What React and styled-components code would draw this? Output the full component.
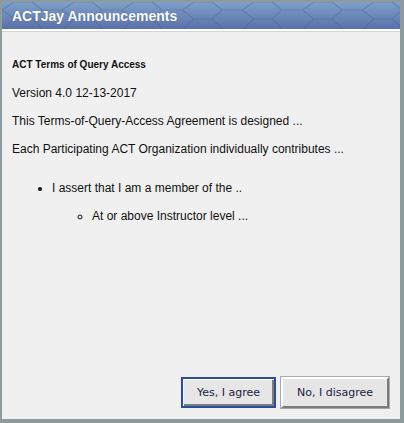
import React from 'react';
import styled, { createGlobalStyle } from 'styled-components';

const hexPattern = encodeURIComponent(
  `<svg xmlns='http://www.w3.org/2000/svg' width='60' height='34'><path d='M0 8 L12 0 L30 0 L40 8 L30 17 L12 17 Z M40 8 L60 8 M30 17 L40 26 L30 34 M12 17 L2 26 L12 34' fill='none' stroke='#415b92' stroke-opacity='0.35' stroke-width='1.2'/></svg>`
);

const GlobalStyle = createGlobalStyle`
  html, body {
    margin: 0;
    padding: 0;
    background: #8d9b9c;
  }
  body {
    font-family: "Liberation Sans", Arial, sans-serif;
  }
`;

const Frame = styled.div`
  width: 404px;
  height: 423px;
  box-sizing: border-box;
  border-style: solid;
  border-color: #8d9b9c;
  border-width: 2px 4px 4px 2px;
  display: flex;
  flex-direction: column;
  background: #f0f0f0;
`;

const Header = styled.div`
  height: 27px;
  flex-shrink: 0;
  display: flex;
  align-items: center;
  padding-left: 10px;
  background-color: #6b88bb;
  background-image: url("data:image/svg+xml,${hexPattern}"),
    linear-gradient(#7fa0c9, #5a71a9);
  border-bottom: 2px solid #ffffff;
  box-shadow: 0 1px 0 #d4d4d4;
`;

const Title = styled.h1`
  margin: 0;
  font-size: 14px;
  font-weight: bold;
  color: #ffffff;
  text-shadow: 0 0 1px rgba(40, 60, 110, 0.6);
`;

const Body = styled.div`
  flex: 1;
  padding: 27px 10px 0;
  font-size: 12px;
  line-height: 14px;
  color: #111111;
`;

const Heading = styled.h4`
  margin: 0 0 14px;
  font-size: 10px;
  font-weight: bold;
`;

const Para = styled.p`
  margin: 14px 0;
`;

const List = styled.ul`
  margin: ${(p) => (p.$nested ? '14px 0 0' : '25px 0 0')};
  padding-left: 40px;
  list-style-type: ${(p) => (p.$nested ? 'circle' : 'disc')};
`;

const Footer = styled.div`
  display: flex;
  justify-content: flex-end;
  gap: 5px;
  padding: 0 11px 11px 0;
`;

const Button = styled.button`
  height: 31px;
  box-sizing: border-box;
  padding: 0 12px;
  font-family: "DejaVu Sans", Verdana, sans-serif;
  font-size: 11px;
  color: #1a1a40;
  background: #e6e6e6;
  cursor: pointer;
  border: 2px solid;
  border-color: ${(p) =>
    p.$primary ? '#2b4b9e' : '#ffffff #7c7c7c #7c7c7c #ffffff'};
  outline: ${(p) => (p.$primary ? 'none' : '1px solid #a8a8a8')};
  box-shadow: ${(p) =>
    p.$primary
      ? 'inset 1px 1px 0 #ffffff, inset -2px -2px 0 #7c7c7c'
      : 'none'};
  min-width: ${(p) => (p.$primary ? '95px' : '108px')};
`;

export default function App() {
  return (
    <>
      <GlobalStyle />
      <Frame>
        <Header>
          <Title>ACTJay Announcements</Title>
        </Header>
        <Body>
          <Heading>ACT Terms of Query Access</Heading>
          <Para>Version 4.0 12-13-2017</Para>
          <Para>This Terms-of-Query-Access Agreement is designed ...</Para>
          <Para>Each Participating ACT Organization individually contributes ...</Para>
          <List>
            <li>
              I assert that I am a member of the ..
              <List $nested>
                <li>At or above Instructor level ...</li>
              </List>
            </li>
          </List>
        </Body>
        <Footer>
          <Button $primary>Yes, I agree</Button>
          <Button>No, I disagree</Button>
        </Footer>
      </Frame>
    </>
  );
}
